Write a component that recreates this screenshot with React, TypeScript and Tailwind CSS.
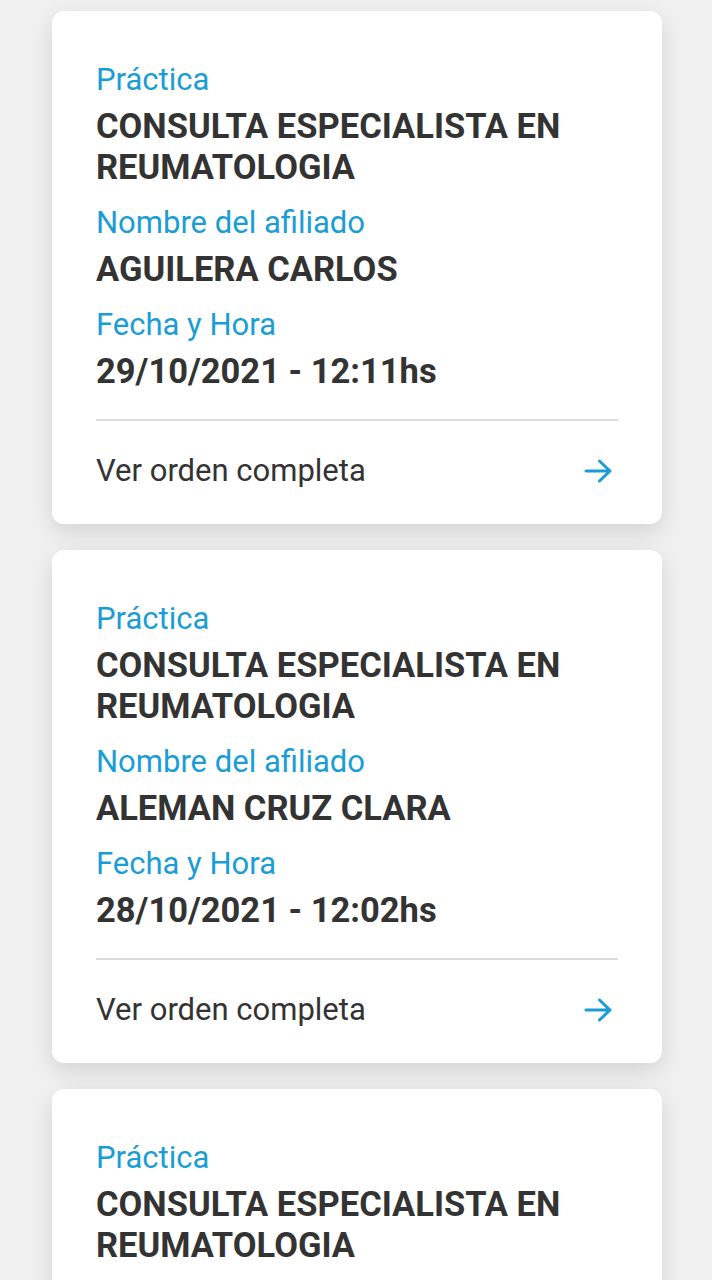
import React from 'react';

interface Orden {
  practica: string;
  afiliado?: string;
  fecha?: string;
}

const ordenes: Orden[] = [
  {
    practica: 'CONSULTA ESPECIALISTA EN REUMATOLOGIA',
    afiliado: 'AGUILERA CARLOS',
    fecha: '29/10/2021 - 12:11hs',
  },
  {
    practica: 'CONSULTA ESPECIALISTA EN REUMATOLOGIA',
    afiliado: 'ALEMAN CRUZ CLARA',
    fecha: '28/10/2021 - 12:02hs',
  },
  {
    practica: 'CONSULTA ESPECIALISTA EN REUMATOLOGIA',
    afiliado: 'AGUILERA CARLOS',
    fecha: '27/10/2021 - 11:40hs',
  },
];

function Field({ label, value, first }: { label: string; value: string; first?: boolean }) {
  return (
    <div className={first ? '' : 'mt-[18px]'}>
      <p className="text-[31px] leading-[34px] text-[#1a9dd6]">{label}</p>
      <p className="mt-[9px] text-[34.5px] leading-[41px] font-bold text-[#333333] pr-6">{value}</p>
    </div>
  );
}

function ArrowRight() {
  return (
    <svg width="30" height="26" viewBox="0 0 30 26" fill="none" className="text-[#1a9dd6]">
      <path
        d="M2 13h24M15.5 3l10.5 10-10.5 10"
        stroke="currentColor"
        strokeWidth="3"
        strokeLinecap="round"
        strokeLinejoin="round"
      />
    </svg>
  );
}

function OrdenCard({ orden }: { orden: Orden }) {
  return (
    <div className="bg-white rounded-[12px] shadow-[0_8px_24px_rgba(0,0,0,0.13)] px-[44px] pt-[52px] pb-[36px]">
      <Field label="Práctica" value={orden.practica} first />
      {orden.afiliado && <Field label="Nombre del afiliado" value={orden.afiliado} />}
      {orden.fecha && <Field label="Fecha y Hora" value={orden.fecha} />}

      <div className="mt-[27px] h-[2px] bg-[#dcdcdc]" />

      <button className="mt-[33px] w-full flex items-center justify-between text-left">
        <span className="text-[31px] leading-[34px] text-[#333333]">Ver orden completa</span>
        <span className="mr-[4px]">
          <ArrowRight />
        </span>
      </button>
    </div>
  );
}

export default function App() {
  return (
    <div
      className="min-h-screen bg-[#f1f1f1] pt-[11px] pl-[52px] pr-[50px] flex flex-col gap-[26px]"
      style={{ fontFamily: 'Roboto, "Noto Sans", sans-serif' }}
    >
      {ordenes.map((o, i) => (
        <OrdenCard key={i} orden={o} />
      ))}
    </div>
  );
}
